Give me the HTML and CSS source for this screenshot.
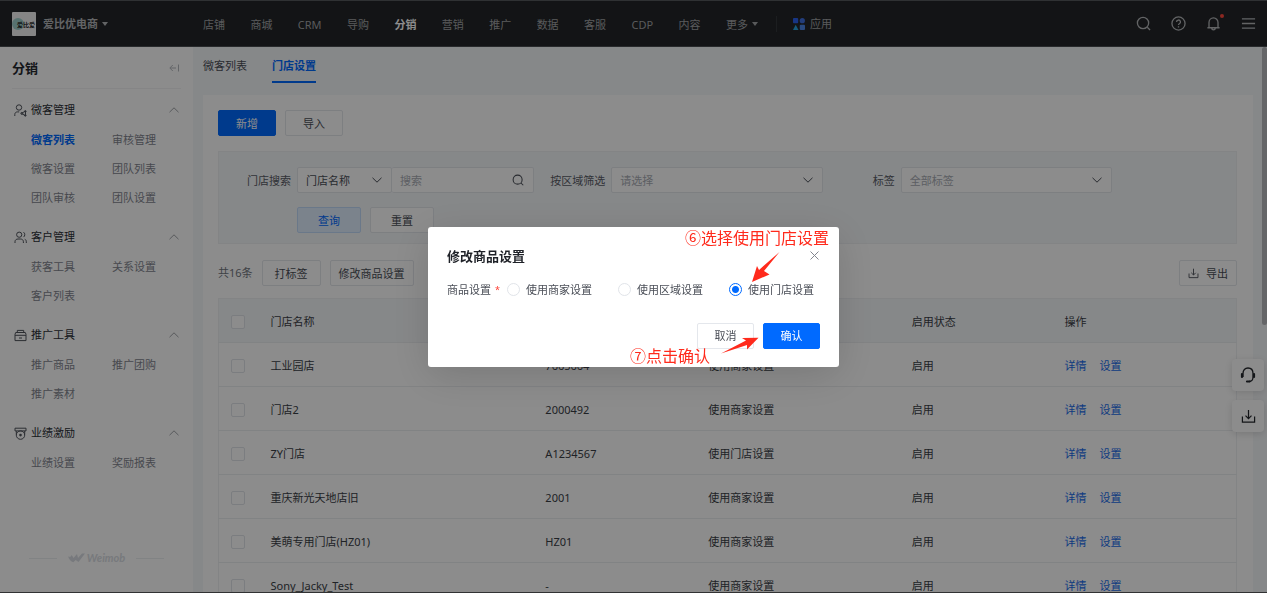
FILE: index.html
```
<!DOCTYPE html>
<html lang="zh-CN">
<head>
<meta charset="utf-8">
<title>门店设置</title>
<link rel="stylesheet" href="styles.css">
</head>
<body>
<svg class="sprite" aria-hidden="true">
  <symbol id="up" viewBox="0 0 10 6"><path d="M.5 5.200 5 .8l4.500 4.400"/></symbol>
  <symbol id="down" viewBox="0 0 10 6"><path d="M.5.8 5 5.200 9.500.8"/></symbol>
  <symbol id="search" viewBox="0 0 16 16"><circle cx="7.500" cy="7.500" r="6"/><path d="m12 12 3 3"/></symbol>
  <symbol id="download" viewBox="0 0 16 16"><path d="M1.500 8v6h13V8M8 1v9M4.800 7 8 10.200 11.200 7"/></symbol>
</svg>

<header class="topbar">
  <button class="brand" type="button">
    <svg class="brand-logo" viewBox="0 0 24 24"><rect width="24" height="24" rx="1" fill="#f2f2f2"/><circle cx="6" cy="12" r="6" fill="#9fd0cd"/><text x="5" y="15" class="brand-logo-text">爱比爱</text></svg>
    <span>爱比优电商</span><i class="caret"></i>
  </button>
  <nav class="mainnav">
    <a href="#">店铺</a><a href="#">商城</a><a href="#">CRM</a><a href="#">导购</a><a href="#" class="current">分销</a><a href="#">营销</a><a href="#">推广</a><a href="#">数据</a><a href="#">客服</a><a href="#">CDP</a><a href="#">内容</a><a href="#">更多<i class="caret"></i></a>
  </nav>
  <a href="#" class="apps">
    <svg width="12" height="12" viewBox="0 0 12 12"><rect width="5.200" height="5.200" rx="1" fill="#2b62f0"/><circle cx="9.300" cy="2.700" r="2.600" fill="#3f6fe0"/><path d="M2.700 6.800 5.500 12H0z" fill="#27a5e0"/><rect x="6.800" y="6.800" width="5.200" height="5.200" rx="1" fill="#4b86e8"/></svg>
    应用
  </a>
  <div class="tools">
    <button type="button" aria-label="搜索"><svg class="ico" width="15" height="15"><use href="#search"/></svg></button>
    <button type="button" aria-label="帮助"><svg class="ico" width="15" height="15" viewBox="0 0 16 16"><circle cx="8" cy="8" r="7"/><path d="M5.900 6.400a2.100 2.100 0 1 1 3 1.900c-.6.300-.9.600-.9 1.300M8 11v1.200"/></svg></button>
    <button type="button" aria-label="通知" class="bell"><svg class="ico" width="15" height="15" viewBox="0 0 16 16"><path d="M1.500 12.500h13M3.200 12.500V6.800a4.800 4.800 0 0 1 9.600 0v5.700M6 13c.3 2.300 3.700 2.300 4 0"/></svg></button>
    <button type="button" aria-label="菜单"><svg class="ico" width="15" height="15" viewBox="0 0 16 16"><path d="M1 3h14M1 8h14M1 13h14"/></svg></button>
  </div>
</header>

<div class="shell">
  <aside class="sidebar">
    <div class="side-title"><h2>分销</h2><button type="button" aria-label="收起"><svg class="ico" width="10" height="8" viewBox="0 0 10 8"><path d="M9.500.5v7M7 4H1M3.800 1 .8 4l3 3"/></svg></button></div>
    <section class="group">
      <h3><svg class="ico" width="13" height="13" viewBox="0 0 13 13"><circle cx="5" cy="3.500" r="2.700"/><path d="M.8 12V10.500c0-1.500 1-2.600 2.600-2.600h1.800"/><path d="m7.500 9.400 4-2.400v4.800z"/><circle cx="7.800" cy="9.400" r="1"/><circle cx="11.300" cy="7.400" r=".8"/><circle cx="11.300" cy="11.400" r=".8"/></svg>微客管理<svg class="ico fold"><use href="#up"/></svg></h3>
      <ul><li><a href="#" class="current">微客列表</a></li><li><a href="#">审核管理</a></li><li><a href="#">微客设置</a></li><li><a href="#">团队列表</a></li><li><a href="#">团队审核</a></li><li><a href="#">团队设置</a></li></ul>
    </section>
    <section class="group">
      <h3><svg class="ico" width="13" height="13" viewBox="0 0 13 13"><circle cx="5.200" cy="3.700" r="2.600"/><path d="M1 12v-1.300C1 9 2.300 8 4 8h2.400c1.700 0 3 1 3 2.700V12M9.500 1.200c1.700.8 1.700 4 0 4.900M10.800 8.200c1 .5 1.500 1.300 1.500 2.500V12"/></svg>客户管理<svg class="ico fold"><use href="#up"/></svg></h3>
      <ul><li><a href="#">获客工具</a></li><li><a href="#">关系设置</a></li><li><a href="#">客户列表</a></li></ul>
    </section>
    <section class="group">
      <h3><svg class="ico" width="13" height="13" viewBox="0 0 13 13"><path d="M3.300 3.500V1.400h6.400v2.100M1.700 3.500h9.600l.7 1.800v6.300H1V5.300zM1 6.300h11M5 9h3"/></svg>推广工具<svg class="ico fold"><use href="#up"/></svg></h3>
      <ul><li><a href="#">推广商品</a></li><li><a href="#">推广团购</a></li><li><a href="#">推广素材</a></li></ul>
    </section>
    <section class="group">
      <h3><svg class="ico" width="13" height="13" viewBox="0 0 13 13"><path d="M1 1.200h11v2.700H1zM2.300 4v3.500M10.700 4v3.500"/><circle cx="6.500" cy="8.100" r="4.200"/><circle class="dot" cx="6.500" cy="8.100" r="1.300"/></svg>业绩激励<svg class="ico fold"><use href="#up"/></svg></h3>
      <ul><li><a href="#">业绩设置</a></li><li><a href="#">奖励报表</a></li></ul>
    </section>
    <div class="powered"><svg width="17" height="10" viewBox="0 0 17 10"><path d="M0 3.200C1.500 4.300 3 4 3.500 2c1 1 1.500 2 2 3L9 1l1 4 4-4.500h3L10.500 9 7.700 7 5.300 9.200C3 8.500 1 6.500 0 3.200z" fill="currentColor"/></svg><span>Weimob</span></div>
  </aside>

  <main class="main">
    <nav class="tabs"><a href="#">微客列表</a><a href="#" class="current">门店设置</a></nav>
    <div class="panel">
      <div class="actions"><button type="button" class="btn primary">新增</button><button type="button" class="btn">导入</button></div>

      <form class="filters">
        <label for="kind">门店搜索</label>
        <div class="combo">
          <div class="select"><select id="kind"><option>门店名称</option></select><svg class="ico"><use href="#down"/></svg></div>
          <div class="searchbox"><input type="text" placeholder="搜索" aria-label="搜索"><svg class="ico" width="12" height="12"><use href="#search"/></svg></div>
        </div>
        <label for="area">按区域筛选</label>
        <div class="select empty"><select id="area"><option>请选择</option></select><svg class="ico"><use href="#down"/></svg></div>
        <label for="tag">标签</label>
        <div class="select empty"><select id="tag"><option>全部标签</option></select><svg class="ico"><use href="#down"/></svg></div>
        <div class="filter-buttons"><button type="button" class="btn soft">查询</button><button type="button" class="btn">重置</button></div>
      </form>

      <div class="toolbar"><span>共16条</span><button type="button" class="btn">打标签</button><button type="button" class="btn compact">修改商品设置</button><button type="button" class="btn compact export"><svg class="ico" width="11" height="11"><use href="#download"/></svg>导出</button></div>

      <table class="stores">
        <thead><tr><th class="c-check"><input type="checkbox" aria-label="全选"></th><th class="c-name">门店名称</th><th class="c-code">门店编码</th><th class="c-goods">商品设置</th><th class="c-state">启用状态</th><th>操作</th></tr></thead>
        <tbody>
          <tr><td><input type="checkbox" aria-label="工业园店"></td><td>工业园店</td><td>7665664</td><td>使用商家设置</td><td>启用</td><td><a href="#">详情</a><a href="#">设置</a></td></tr>
          <tr><td><input type="checkbox" aria-label="门店2"></td><td>门店2</td><td>2000492</td><td>使用商家设置</td><td>启用</td><td><a href="#">详情</a><a href="#">设置</a></td></tr>
          <tr><td><input type="checkbox" aria-label="ZY门店"></td><td>ZY门店</td><td>A1234567</td><td>使用门店设置</td><td>启用</td><td><a href="#">详情</a><a href="#">设置</a></td></tr>
          <tr><td><input type="checkbox" aria-label="重庆新光天地店旧"></td><td>重庆新光天地店旧</td><td>2001</td><td>使用商家设置</td><td>启用</td><td><a href="#">详情</a><a href="#">设置</a></td></tr>
          <tr><td><input type="checkbox" aria-label="美萌专用门店(HZ01)"></td><td>美萌专用门店(HZ01)</td><td>HZ01</td><td>使用商家设置</td><td>启用</td><td><a href="#">详情</a><a href="#">设置</a></td></tr>
          <tr><td><input type="checkbox" aria-label="Sony_Jacky_Test"></td><td>Sony_Jacky_Test</td><td>-</td><td>使用商家设置</td><td>启用</td><td><a href="#">详情</a><a href="#">设置</a></td></tr>
        </tbody>
      </table>
    </div>
  </main>
  <div class="scrollbar"><div class="thumb"></div></div>
</div>

<div class="floaters">
  <button type="button" aria-label="客服"><svg class="ico" width="16" height="16" viewBox="0 0 16 16"><path d="M3 10V6.500C3 3 5 1 8 1s5 2 5 5.500V10c0 2.500-1.500 4.500-4 4.500"/><path class="thick" d="M2 7v3M14 7v3M7 14.500h2.500"/></svg></button>
  <button type="button" aria-label="下载"><svg class="ico" width="15" height="15"><use href="#download"/></svg></button>
</div>

<div class="mask">
  <div class="modal" role="dialog" aria-labelledby="modal-title">
    <div class="modal-head"><h1 id="modal-title">修改商品设置</h1><button type="button" aria-label="关闭"><svg class="ico" width="9" height="9" viewBox="0 0 9 9"><path d="m.5.5 8 8M8.500.5l-8 8"/></svg></button></div>
    <div class="modal-body">
      <span>商品设置</span><span class="required">*</span>
      <div class="radios">
        <label><input type="radio" name="goods">使用商家设置</label>
        <label><input type="radio" name="goods">使用区域设置</label>
        <label><input type="radio" name="goods" checked>使用门店设置</label>
      </div>
    </div>
    <div class="modal-foot"><button type="button" class="btn">取消</button><button type="button" class="btn primary">确认</button></div>
    <div class="note note-option">⑥选择使用门店设置</div>
    <svg class="arrow arrow-option" width="28" height="30" viewBox="0 0 28 30"><path d="M27.500 0 12 19l5.500 3.500L0 30 5 14l2 4z"/></svg>
    <div class="note note-confirm">⑦点击确认</div>
    <svg class="arrow arrow-confirm" width="38" height="18" viewBox="0 0 38 18"><path d="M0 16.500 25 3.500 21 1l16.500-.2L26 12.500V8z"/></svg>
  </div>
</div>
</body>
</html>
```

FILE: styles.css
```
* { box-sizing: border-box; }
body {
  margin: 0;
  height: 100vh;
  display: flex;
  flex-direction: column;
  overflow: hidden;
  background: #f5f7fa;
  border-bottom: 1px solid #5a5c5e;
  color: #4a4e57;
  font: 11px/16px "Noto Sans", "Noto Sans CJK SC", sans-serif;
}
h1, h2, h3, ul { margin: 0; padding: 0; font-size: inherit; }
ul { list-style: none; }
a { color: inherit; text-decoration: none; }
button, input, select { font: inherit; color: inherit; }
button { padding: 0; border: 0; background: none; }
.sprite { position: absolute; width: 0; height: 0; }
.ico { fill: none; stroke: currentColor; stroke-width: 1; flex: none; }
.dot { fill: currentColor; stroke: none; }
.caret { display: inline-block; border: 3px solid transparent; border-top: 4px solid currentColor; border-bottom: 0; margin-left: 4px; vertical-align: 3px; }

/* top bar */
.topbar {
  flex: none;
  height: 47px;
  display: flex;
  align-items: center;
  padding: 0 11px 0 12px;
  background: #232629;
  border-top: 1px solid #565a5e;
  border-bottom: 1px solid #4a4d51;
  color: #a2a4a7;
}
.brand { width: 191px; display: flex; align-items: center; font-weight: 700; color: #b4b6b9; }
.brand span { margin-left: 7px; }
.brand-logo { width: 24px; height: 24px; }
.brand-logo-text { font-size: 6px; font-weight: 700; fill: #222; }
.mainnav { width: 555px; display: flex; justify-content: space-between; padding-top: 2px; white-space: nowrap; }
.mainnav .current { color: #fff; font-weight: 700; }
.apps { display: flex; align-items: center; gap: 5px; margin-left: 18px; padding-left: 16px; border-left: 1px solid #34373b; }
.tools { margin-left: auto; display: flex; gap: 20px; color: #b4b6b9; }
.tools button { display: flex; }
.tools .ico { stroke-width: 1.4; }
.bell { position: relative; }
.bell::after { content: ""; position: absolute; top: -2px; right: -3px; width: 4px; height: 4px; border-radius: 50%; background: #ff4a3d; }

/* side bar */
.shell { flex: 1; min-height: 0; display: flex; }
.sidebar { width: 193px; flex: none; display: flex; flex-direction: column; padding: 0 12px 26px; background: #fff; }
.side-title { height: 42px; display: flex; align-items: center; justify-content: space-between; margin-bottom: 6px; padding-right: 2px; border-bottom: 1px solid #f2f3f5; color: #b5b8be; }
.side-title h2 { font-size: 13px; color: #26292f; }
.group { margin-bottom: 10px; }
.group h3 { height: 30px; display: flex; align-items: center; gap: 4px; padding: 0 2px; font-weight: 400; color: #2c2f36; }
.group h3 > .ico:first-child { color: #50545c; }
.group h3 > .fold { width: 10px; height: 6px; margin-left: auto; color: #a0a3a9; }
.group ul { display: grid; grid-template-columns: 81px 1fr; grid-auto-rows: 29px; align-items: center; padding-left: 19px; color: #83868f; }
.group .current { color: #006aff; font-weight: 700; }
.powered { margin-top: auto; display: flex; align-items: center; justify-content: center; gap: 2px; color: #d9dde3; font: italic 700 11px/16px Lato, sans-serif; }
.powered::before, .powered::after { content: ""; width: 28px; border-top: 1px solid #eceef1; margin: 0 9px; }

/* content */
.main { flex: 1; min-width: 0; display: flex; flex-direction: column; padding: 0 9px 0 10px; overflow: hidden; }
.tabs { flex: none; display: flex; gap: 25px; height: 36px; margin-bottom: 12px; color: #4b4f58; }
.tabs a { padding-top: 11px; }
.tabs .current { color: #006aff; font-weight: 700; border-bottom: 2px solid #006aff; }
.panel { flex: none; background: #fff; padding: 15px 16px 15px 15px; }
.btn { height: 26px; min-width: 57px; padding: 1px 12px 0; border: 1px solid #e4e7ec; border-radius: 2px; background: #fff; color: #4a4e57; }
.btn.primary { background: #006aff; border-color: #006aff; color: #fff; }
.btn.soft { background: #e0efff; border-color: #c2dbfa; color: #006aff; }
.btn.compact { padding: 1px 8px 0; }
.actions { display: flex; gap: 9px; margin-bottom: 15px; }
.actions .btn { width: 58px; }
.filters {
  display: grid;
  grid-template-columns: 57px 237fr 65px 211fr 66px 211fr;
  gap: 14px 6px;
  align-items: center;
  padding: 15px 124px 10px 15px;
  border: 1px solid #eef0f3;
  background: #f5f7fa;
  margin-bottom: 16px;
}
.filters > label { padding-top: 1px; text-align: right; white-space: nowrap; color: #595d66; }
.combo { display: grid; grid-template-columns: 95px 1fr; }
.select { position: relative; }
.select select, .searchbox input { width: 100%; height: 26px; display: block; padding: 1px 8px 0; border: 1px solid #e4e7ec; border-radius: 2px; background: #fff; appearance: none; }
.select .ico { position: absolute; right: 10px; top: 10px; width: 10px; height: 6px; pointer-events: none; }
.empty select, .searchbox input::placeholder { color: #a9adb5; opacity: 1; }
.searchbox { position: relative; }
.searchbox input { border-left: 0; }
.searchbox .ico { position: absolute; right: 10px; top: 7px; stroke-width: 1.4; }
.filter-buttons { grid-column: 2 / -1; display: flex; gap: 9px; }
.filter-buttons .btn { width: 64px; }
.toolbar { display: flex; align-items: center; gap: 9px; margin-bottom: 12px; color: #73777f; }
.export { margin-left: auto; display: flex; align-items: center; gap: 7px; }
.export .ico { stroke-width: 1.3; }

.stores { width: 100%; table-layout: fixed; border-collapse: collapse; border: 1px solid #eef0f3; color: #3a3e46; }
.stores th { background: #f5f7fa; font-weight: 400; text-align: left; }
.stores th, .stores td { height: 44px; padding: 2px 12px 0; border-bottom: 1px solid #eceef1; }
.c-check { width: 40px; }
.c-name { width: 27%; }
.c-code { width: 16%; }
.c-goods { width: 20%; }
.c-state { width: 15%; }
.stores td a { color: #1a6cea; margin-right: 13px; }
.stores input { appearance: none; display: block; width: 14px; height: 14px; margin: 0; border: 1px solid #e1e4e9; border-radius: 2px; background: #fff; }

.scrollbar { width: 5px; flex: none; }
.thumb { height: 51%; border-radius: 3px; background: #b9bbbe; }

.floaters { position: fixed; right: 3px; top: 359px; display: grid; gap: 9px; }
.floaters button { width: 32px; height: 32px; display: grid; place-items: center; border-radius: 4px; background: #fff; box-shadow: 0 2px 8px rgba(0, 0, 0, .15); color: #24272c; }
.floaters .ico { stroke-width: 1.3; }
.floaters .thick { stroke-width: 2.2; stroke-linecap: round; }

/* dialog */
.mask { position: fixed; inset: 0; display: grid; place-items: center; background: rgba(0, 0, 0, .45); }
.modal { position: relative; padding: 20px 19px 18px; border-radius: 3px; background: #fff; box-shadow: 0 8px 40px rgba(0, 0, 0, .15); }
.modal-head { display: flex; align-items: center; justify-content: space-between; padding-right: 1px; height: 18px; color: #83868f; }
.modal-head h1 { font-size: 13px; line-height: 18px; color: #1f2228; }
.modal-head button { display: flex; }
.modal-body { display: flex; align-items: center; margin: 17px 0 25px; }
.required { color: #ff3b30; font-size: 9px; margin: 0 7px 0 4px; }
.radios { display: flex; gap: 26px; padding-right: 6px; }
.radios label { display: flex; align-items: center; gap: 6px; }
.radios input { appearance: none; width: 13px; height: 13px; margin: 0; border: 1px solid #e1e4e9; border-radius: 50%; }
.radios input:checked { border-color: #006aff; background: radial-gradient(circle, #006aff 3px, #fff 4px); }
.modal-foot { display: flex; justify-content: flex-end; gap: 9px; }
.note { position: absolute; color: #ff2a1c; font-size: 16px; line-height: 20px; white-space: nowrap; }
.note-option { right: 10px; top: 1px; }
.note-confirm { left: 202px; bottom: 1px; }
.arrow { position: absolute; fill: #ff2a1c; }
.arrow-option { right: 59px; top: 25px; }
.arrow-confirm { right: 80px; bottom: 12px; }
```
